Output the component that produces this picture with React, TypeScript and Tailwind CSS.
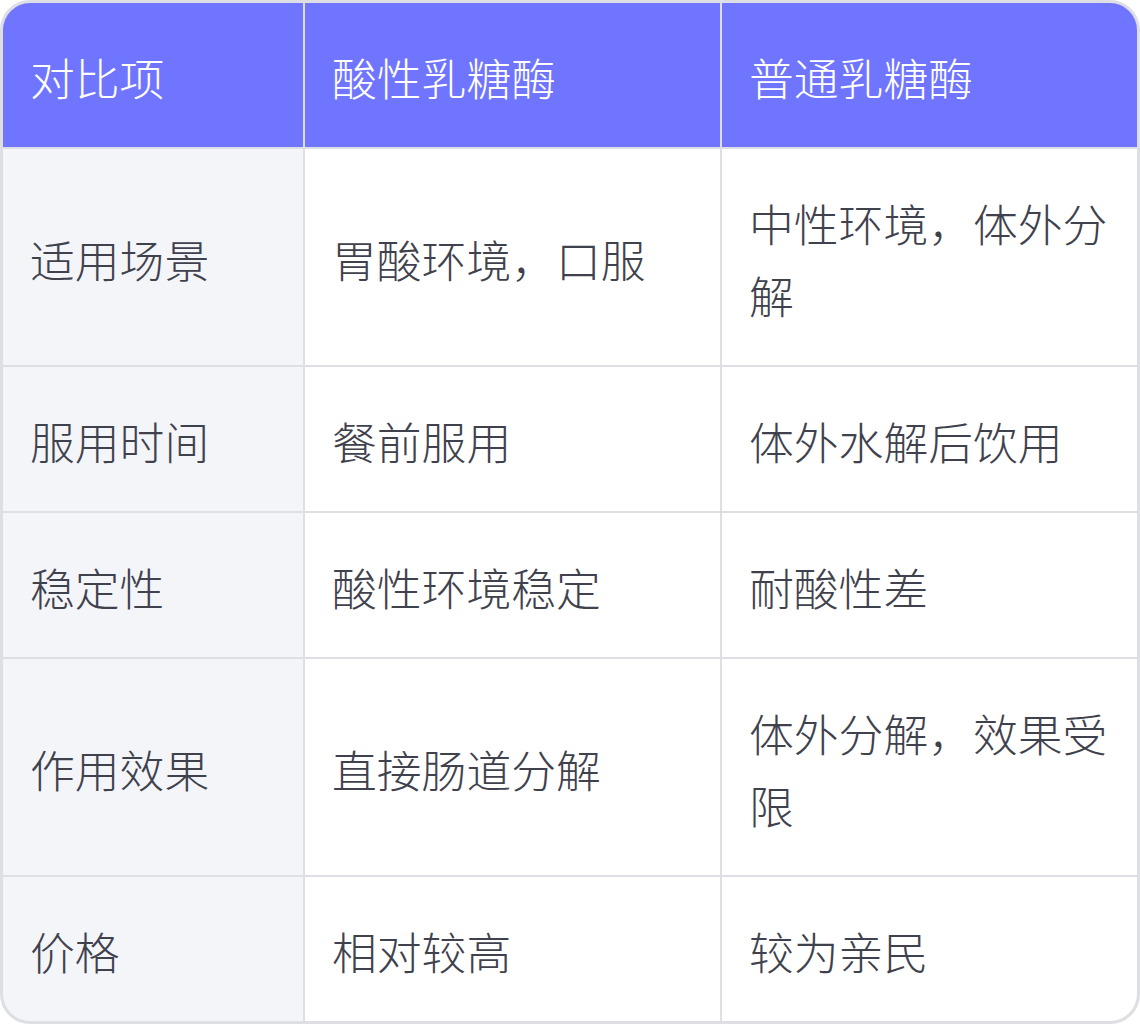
import React from 'react';

const header = ['对比项', '酸性乳糖酶', '普通乳糖酶'];

const rows: string[][] = [
  ['适用场景', '胃酸环境，口服', '中性环境，体外分解'],
  ['服用时间', '餐前服用', '体外水解后饮用'],
  ['稳定性', '酸性环境稳定', '耐酸性差'],
  ['作用效果', '直接肠道分解', '体外分解，效果受限'],
  ['价格', '相对较高', '较为亲民'],
];

const cell = 'flex items-center px-[27px] pt-[38px] pb-[34px] text-[44.8px] leading-[72px] font-light';

export default function App() {
  return (
    <div className="w-[1140px] h-[1024px] bg-white" style={{ fontFamily: '"Noto Sans CJK SC", "Noto Sans", sans-serif' }}>
      <div className="h-full overflow-hidden rounded-[30px] border-[3px] border-[#dedfe4] bg-[#dedfe4]">
        <div className="grid grid-cols-[300px_415px_415px] gap-[2px]">
          {header.map((h) => (
            <div key={h} className={`${cell} bg-[#7075ff] text-white`}>
              {h}
            </div>
          ))}
          {rows.map((r) =>
            r.map((c, i) => (
              <div
                key={r[0] + i}
                className={`${cell} text-[#3f424d] ${i === 0 ? 'bg-[#f4f5f9]' : 'bg-white'}`}
              >
                <span>{c}</span>
              </div>
            ))
          )}
        </div>
      </div>
    </div>
  );
}
